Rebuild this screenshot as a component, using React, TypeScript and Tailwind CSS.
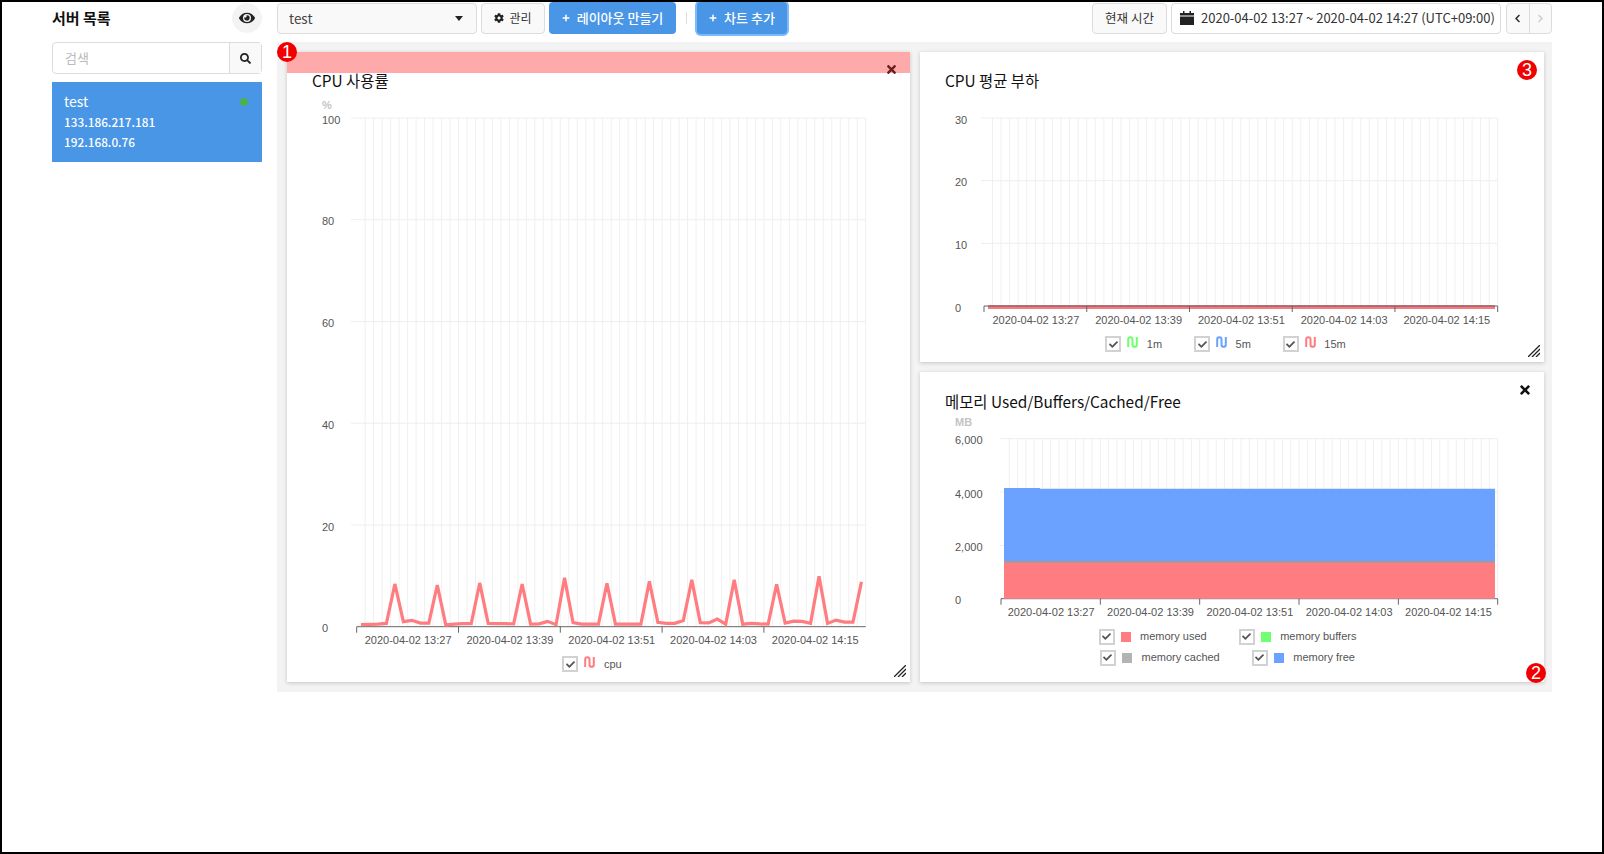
import React from 'react';
import { FaCheck, FaChevronLeft, FaChevronRight, FaCog, FaEye, FaPlus, FaSearch, FaTimes } from 'react-icons/fa';

const TIME_LABELS = ['2020-04-02 13:27', '2020-04-02 13:39', '2020-04-02 13:51', '2020-04-02 14:03', '2020-04-02 14:15'];

const CPU_DATA = [
  0.4, 0.45, 0.5, 0.65, 8.4, 1.0, 1.25, 0.7, 0.7, 8.2,
  0.35, 0.5, 0.6, 0.6, 8.6, 0.65, 0.6, 0.6, 0.55, 8.4,
  0.5, 0.55, 1.05, 0.4, 9.6, 0.8, 0.5, 0.5, 0.5, 8.55,
  0.5, 0.5, 0.5, 0.5, 8.9, 0.85, 0.65, 0.65, 1.2, 9.2,
  0.8, 0.75, 1.5, 0.5, 9.2, 0.5, 0.65, 0.55, 0.5, 8.35,
  0.7, 1.1, 1.05, 0.65, 9.9, 0.65, 1.3, 0.9, 0.9, 8.8,
];

interface ChartProps {
  height: number;
  unit?: string;
  unitY?: number;
  gridX0: number;
  axisX0: number;
  axisX1: number;
  endTick?: boolean;
  grid: { label: string; y: number }[];
  baseY: number;
  labelY: number;
  children?: React.ReactNode;
}

// bands are 1 minute wide, grid lines sit on the band edges and a tick every 12 bands
const Chart = ({ height, unit, unitY, gridX0, axisX0, axisX1, endTick, grid, baseY, labelY, children }: ChartProps) => {
  const band = (axisX1 - axisX0) / 60;
  const top = grid[0].y;
  const edges = [0, 1, 2, 3, 4, 5].map((i) => axisX0 + i * 12 * band);
  return (
    <svg height={height} className="block w-full overflow-visible font-['Liberation_Sans',sans-serif]">
      {Array.from({ length: 60 }, (_, i) => (
        <line key={i} x1={axisX0 + (i + 1) * band} x2={axisX0 + (i + 1) * band} y1={top} y2={baseY} stroke="#f0f0f0" />
      ))}
      {grid.map((g) => (
        <g key={g.label}>
          {g.label !== '0' && <line x1={gridX0} x2={axisX1} y1={g.y} y2={g.y} stroke="#eeeeee" />}
          <text x={35} y={g.y + 5.5} fontSize={11} fill="#555">{g.label}</text>
        </g>
      ))}
      {unit && <text x={35} y={unitY} fontSize={11} fontWeight={700} fill="#c4c4c4">{unit}</text>}
      <line x1={axisX0} x2={axisX1} y1={baseY} y2={baseY} stroke="#666" />
      {children}
      {(endTick ? edges : edges.slice(0, 5)).map((x) => (
        <line key={x} x1={x} x2={x} y1={baseY} y2={baseY + 6} stroke="#666" />
      ))}
      {TIME_LABELS.map((label, i) => (
        <text key={label} x={(edges[i] + edges[i + 1]) / 2 + 0.5} y={labelY} fontSize={11} fill="#555" textAnchor="middle">{label}</text>
      ))}
    </svg>
  );
};

const WaveIcon = ({ color }: { color: string }) => (
  <svg width="11" height="12" viewBox="0 0 11 12" fill="none" stroke={color} strokeWidth="2" className="block -mt-[5px]">
    <path d="M1.2 11V3.3a2.15 2.15 0 0 1 4.3 0v5.4a2.15 2.15 0 0 0 4.3 0V1" />
  </svg>
);

const LegendItem = ({ label, color, swatch }: { label: string; color: string; swatch?: boolean }) => (
  <div className="flex items-center h-[21px]">
    <span className="flex items-center justify-center w-4 h-4 border-2 border-[#d2d2d2] text-[#555] text-[9px]">
      <FaCheck />
    </span>
    <span className="flex justify-center w-[11px] ml-[6px]">
      {swatch ? <span className={`block w-[10px] h-[10px] ${color}`} /> : null}
      {!swatch && <WaveIcon color={color} />}
    </span>
    <span className="ml-[8.5px] text-[11px] text-[#555] font-['Liberation_Sans',sans-serif]">{label}</span>
  </div>
);

const ResizeHandle = () => (
  <svg width="12" height="12" viewBox="0 0 12 12" className="absolute right-[4px] bottom-[5px]" stroke="#222" strokeWidth="1.3">
    <path d="M0 12 12 0M4 12l8-8M8 12l4-4" />
  </svg>
);

const Badge = ({ n, className }: { n: number; className: string }) => (
  <span className={`absolute z-10 flex items-center justify-center w-5 h-5 rounded-full bg-[#f00000] text-white text-[18px] leading-none font-['Liberation_Sans',sans-serif] ${className}`}>
    {n}
  </span>
);

const ServerSidebar = () => (
  <aside className="w-[210px] shrink-0">
    <div className="flex items-center justify-between h-[32px]">
      <h2 className="text-[15px] font-bold text-[#111]">서버 목록</h2>
      <button className="flex items-center justify-center w-[30px] h-[30px] rounded-full bg-[#f3f3f3] text-[#222] text-[16px]">
        <FaEye />
      </button>
    </div>
    <div className="flex h-[32px] mt-[8px] border border-[#dcdcdc] rounded-sm">
      <input placeholder="검색" className="flex-1 min-w-0 px-3 text-[13px] outline-none placeholder:text-[#bbb]" />
      <button className="flex items-center justify-center w-[32px] border-l border-[#dcdcdc] bg-[#f9f9f9] text-[#222] text-[11px]">
        <FaSearch />
      </button>
    </div>
    <div className="relative h-[80px] mt-[8px] px-3 pt-[9px] bg-[#4a96e6] text-white">
      <div className="text-[14px] leading-[21px]">test</div>
      <div className="text-[11.8px] font-medium leading-[20px]">133.186.217.181</div>
      <div className="text-[11.8px] font-medium leading-[20px]">192.168.0.76</div>
      <span className="absolute top-[16px] right-[14px] w-2 h-2 rounded-full bg-[#4caf50]" />
    </div>
  </aside>
);

const Toolbar = () => (
  <div className="flex items-center h-[32px] text-[13px] text-[#333]">
    <div className="flex items-center justify-between w-[200px] h-[31px] pl-[11px] pr-3 border border-[#dcdcdc] rounded-sm bg-[#f9f9f9]">
      <span className="text-[13.5px] text-[#444]">test</span>
      <span className="w-0 h-0 border-x-[4px] border-x-transparent border-t-[5px] border-t-[#222] mr-[1px]" />
    </div>
    <button className="flex items-center justify-center gap-[5px] w-[64px] h-[31px] ml-1 border border-[#dcdcdc] rounded-sm bg-[#f9f9f9] text-[12px]">
      <FaCog className="text-[10px] text-[#222]" />
      관리
    </button>
    <button className="flex items-center justify-center gap-[7px] w-[127px] h-[32px] ml-1 rounded-sm bg-[#4a96e6] text-white text-[13px] font-medium">
      <FaPlus className="text-[8px]" />
      레이아웃 만들기
    </button>
    <span className="w-px h-[12px] ml-[10px] bg-[#ddd]" />
    <button className="flex items-center justify-center gap-[7px] w-[90px] h-[32px] ml-[10px] rounded-sm bg-[#4a96e6] ring-2 ring-[#7db9ff] text-white text-[13px] font-medium">
      <FaPlus className="text-[8px]" />
      차트 추가
    </button>
    <button className="w-[75px] h-[31px] ml-auto border border-[#dcdcdc] rounded-sm bg-[#f9f9f9] text-[12.5px]">현재 시간</button>
    <div className="flex items-center w-[330px] h-[31px] ml-1 pl-[8px] border border-[#dcdcdc] rounded-sm">
      <svg width="14" height="14" viewBox="0 0 14 14" fill="#222" className="shrink-0">
        <path d="M0 2h3V0h1.5v2h5V0H11v2h3v2.6H0zM0 5.4h14V14H0z" />
      </svg>
      <span className="ml-[7px] text-[13px] whitespace-nowrap text-[#333]">2020-04-02 13:27 ~ 2020-04-02 14:27 (UTC+09:00)</span>
    </div>
    <div className="flex w-[46px] h-[31px] ml-[5px] border border-[#dcdcdc] rounded-sm bg-[#f9f9f9] text-[9px]">
      <button className="flex flex-1 items-center justify-center border-r border-[#dcdcdc] text-[#222]"><FaChevronLeft /></button>
      <button className="flex flex-1 items-center justify-center text-[#ccc]"><FaChevronRight /></button>
    </div>
  </div>
);

const CpuCard = () => {
  const band = 509 / 60;
  const points = CPU_DATA.map((v, i) => `${69.7 + (i + 0.5) * band},${524.7 - v * 5.087}`).join(' ');
  return (
    <div className="relative flex flex-col w-[623px] h-[630px] bg-white shadow-[0_1px_4px_rgba(0,0,0,0.2)]">
      <div className="absolute inset-x-0 top-0 h-[21px] bg-[#ffaaaa]" />
      <FaTimes className="absolute top-[11px] right-[12px] text-[13px] text-[#6b1f1f]" />
      <h3 className="h-[50px] pl-[25px] pt-[17px] text-[15.4px] leading-[22px] text-[#111]">CPU 사용률</h3>
      <Chart
        height={551.5}
        unit="%"
        unitY={7}
        gridX0={64}
        axisX0={69.7}
        axisX1={578.7}
        grid={[
          { label: '100', y: 16 },
          { label: '80', y: 117.7 },
          { label: '60', y: 219.5 },
          { label: '40', y: 321.2 },
          { label: '20', y: 423 },
          { label: '0', y: 524.7 },
        ]}
        baseY={524.7}
        labelY={542}
      >
        <polyline points={points} fill="none" stroke="#ff7c80" strokeWidth="3.2" strokeLinejoin="miter" />
      </Chart>
      <div className="flex justify-center gap-[32px] pr-[13px]">
        <LegendItem label="cpu" color="#ff7c80" />
      </div>
      <ResizeHandle />
    </div>
  );
};

const LoadCard = () => (
  <div className="relative flex flex-col h-[310px] bg-white shadow-[0_1px_4px_rgba(0,0,0,0.2)]">
    <h3 className="h-[50px] pl-[25px] pt-[17px] text-[15.4px] leading-[22px] text-[#111]">CPU 평균 부하</h3>
    <Chart
      height={231.5}
      gridX0={61}
      axisX0={64}
      axisX1={577.7}
      endTick
      grid={[
        { label: '30', y: 16 },
        { label: '20', y: 78.7 },
        { label: '10', y: 141.3 },
        { label: '0', y: 204 },
      ]}
      baseY={204}
      labelY={222}
    >
      <rect x={68} y={204} width={507} height={3} fill="#e98086" />
      <rect x={68} y={203.5} width={507} height={1} fill="#a03c44" />
    </Chart>
    <div className="flex justify-center gap-[32px] pr-[13px]">
      <LegendItem label="1m" color="#6fff6f" />
      <LegendItem label="5m" color="#6ba1ff" />
      <LegendItem label="15m" color="#ff7c80" />
    </div>
    <ResizeHandle />
  </div>
);

const MemoryCard = () => (
  <div className="relative flex flex-col h-[310px] bg-white shadow-[0_1px_4px_rgba(0,0,0,0.2)]">
    <FaTimes className="absolute top-[11px] right-[12px] text-[14px] text-[#111]" />
    <h3 className="h-[40px] pl-[25px] pt-[18px] text-[15.4px] leading-[22px] text-[#111]">메모리 Used/Buffers/Cached/Free</h3>
    <Chart
      height={214}
      unit="MB"
      unitY={14}
      gridX0={80}
      axisX0={81}
      axisX1={577.7}
      endTick
      grid={[
        { label: '6,000', y: 26.7 },
        { label: '4,000', y: 80 },
        { label: '2,000', y: 133.5 },
        { label: '0', y: 186.7 },
      ]}
      baseY={186.7}
      labelY={203.7}
    >
      <path d="M84 76H120V76.7H575V186.7H84Z" fill="#6ba1ff" />
      <rect x={84} y={149} width={491} height={2} fill="#a49a9a" />
      <rect x={84} y={150.7} width={491} height={36} fill="#ff7c80" />
    </Chart>
    <div className="flex flex-wrap justify-center gap-x-[32px] w-[300px] mx-auto pr-[9px]">
      <LegendItem label="memory used" color="bg-[#ff7c80]" swatch />
      <LegendItem label="memory buffers" color="bg-[#6fff6f]" swatch />
      <LegendItem label="memory cached" color="bg-[#b3b3b3]" swatch />
      <LegendItem label="memory free" color="bg-[#6ba1ff]" swatch />
    </div>
  </div>
);

const App = () => (
  <div className="relative h-[854px] border-2 border-black bg-white overflow-hidden font-['Noto_Sans_CJK_KR','Noto_Sans',sans-serif]">
    <div className="flex gap-[15px] pl-[50px]">
      <ServerSidebar />
      <main className="w-[1275px] shrink-0">
        <Toolbar />
        <div className="relative flex gap-[10px] h-[650px] mt-[8px] pt-[10px] pl-[10px] bg-[#f3f3f3]">
          <Badge n={1} className="left-0 top-0" />
          <Badge n={3} className="left-[1240px] top-[18px]" />
          <Badge n={2} className="left-[1249px] top-[621px]" />
          <CpuCard />
          <div className="flex flex-col gap-[10px] w-[624px]">
            <LoadCard />
            <MemoryCard />
          </div>
        </div>
      </main>
    </div>
  </div>
);

export default App;
